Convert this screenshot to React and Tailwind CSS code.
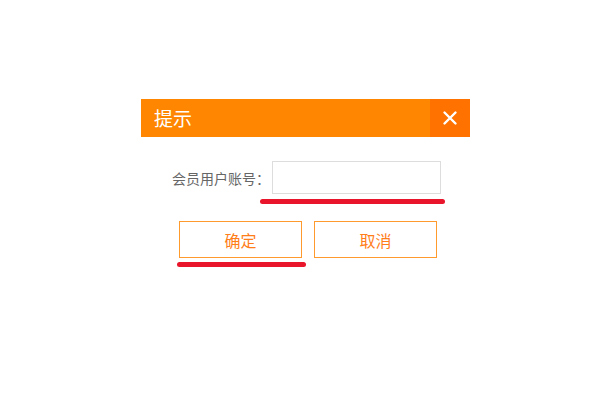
export default function App() {
  const font = { fontFamily: '"Noto Sans CJK SC", "Liberation Sans", sans-serif' };
  return (
    <div className="w-[600px] h-[400px] bg-white pt-[99px] pl-[141px]" style={font}>
      <div className="w-[329px]">
        {/* 标题栏 */}
        <div className="flex h-[38px]">
          <div className="flex-1 bg-[#ff8600] text-white text-[19px] leading-[38px] pl-[13px]">提示</div>
          <div className="w-[40px] bg-[#ff7200] flex items-center justify-center">
            <svg width="16" height="16" viewBox="0 0 16 16" fill="none" stroke="white" strokeWidth="2.4" strokeLinecap="round">
              <path d="M2.5 2.5 L13.5 13.5 M13.5 2.5 L2.5 13.5" />
            </svg>
          </div>
        </div>

        {/* 账号 */}
        <div className="flex items-center mt-[24px] pl-[31px]">
          <span className="text-[14px] text-[#666] w-[100px] leading-none">会员用户账号：</span>
          <input className="w-[169px] h-[33px] border border-[#ddd] outline-none px-2 text-[14px]" />
        </div>
        <div className="ml-[119px] mt-[5px] w-[185px] h-[5px] rounded-full bg-[#e8152b]" />

        {/* 按钮 */}
        <div className="flex gap-[12px] mt-[17px] pl-[38px]">
          <div className="w-[123px]">
            <button className="w-[123px] h-[37px] border border-[#ff9a2e] text-[#ff7e1a] text-[16px]">确定</button>
            <div className="-ml-[2px] mt-[4px] w-[129px] h-[5px] rounded-full bg-[#e8152b]" />
          </div>
          <button className="w-[123px] h-[37px] border border-[#ff9a2e] text-[#ff7e1a] text-[16px]">取消</button>
        </div>
      </div>
    </div>
  );
}
